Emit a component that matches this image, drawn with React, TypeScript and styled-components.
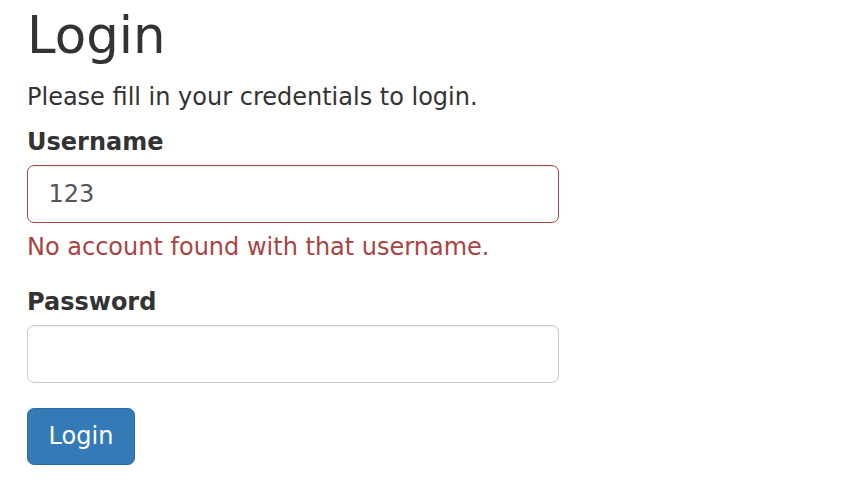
import React from "react";
import styled, { createGlobalStyle } from "styled-components";

const GlobalStyle = createGlobalStyle`
  * { box-sizing: border-box; }
  html, body { margin: 0; padding: 0; background: #fff; }
  body {
    font-family: "DejaVu Sans", "Helvetica Neue", Helvetica, Arial, sans-serif;
    font-size: 24px;
    line-height: 34.29px;
    color: #333;
  }
`;

const Wrapper = styled.div`
  width: 586px;
  padding: 7px 27px 0 27px;
`;

const Title = styled.h2`
  margin: 0 0 16px;
  font-size: 51.4px;
  font-weight: 500;
  line-height: 1.1;
  color: #333;
`;

const Intro = styled.p`
  margin: 0 0 11px;
`;

const Form = styled.form`
  display: flex;
  flex-direction: column;
`;

const FormGroup = styled.div<{ $gap: number }>`
  display: flex;
  flex-direction: column;
  margin-bottom: ${(p) => p.$gap}px;
`;

const Label = styled.label`
  display: block;
  font-weight: bold;
  margin-bottom: 6px;
`;

const Input = styled.input<{ $error?: boolean }>`
  display: block;
  width: 100%;
  height: 57.5px;
  padding: 10px 20.5px;
  font-family: inherit;
  font-size: 24px;
  line-height: 34.29px;
  color: #555;
  background: #fff;
  border: 1px solid ${(p) => (p.$error ? "#a94442" : "#ccc")};
  border-radius: 7px;
  box-shadow: inset 0 1px 1px rgba(0, 0, 0, 0.075);
  outline: none;
`;

const HelpBlock = styled.span`
  display: block;
  margin-top: 7px;
  color: #a94442;
`;

const Button = styled.button`
  align-self: flex-start;
  padding: 10.3px 20.6px;
  font-family: inherit;
  font-size: 24px;
  line-height: 34.29px;
  color: #fff;
  background: #337ab7;
  border: 1px solid #2e6da4;
  border-radius: 7px;
  cursor: pointer;
`;

export default function App() {
  return (
    <>
      <GlobalStyle />
      <Wrapper>
        <Title>Login</Title>
        <Intro>Please fill in your credentials to login.</Intro>
        <Form onSubmit={(e) => e.preventDefault()}>
          <FormGroup $gap={21}>
            <Label>Username</Label>
            <Input $error type="text" defaultValue="123" />
            <HelpBlock>No account found with that username.</HelpBlock>
          </FormGroup>
          <FormGroup $gap={25}>
            <Label>Password</Label>
            <Input type="password" />
          </FormGroup>
          <Button type="submit">Login</Button>
        </Form>
      </Wrapper>
    </>
  );
}
